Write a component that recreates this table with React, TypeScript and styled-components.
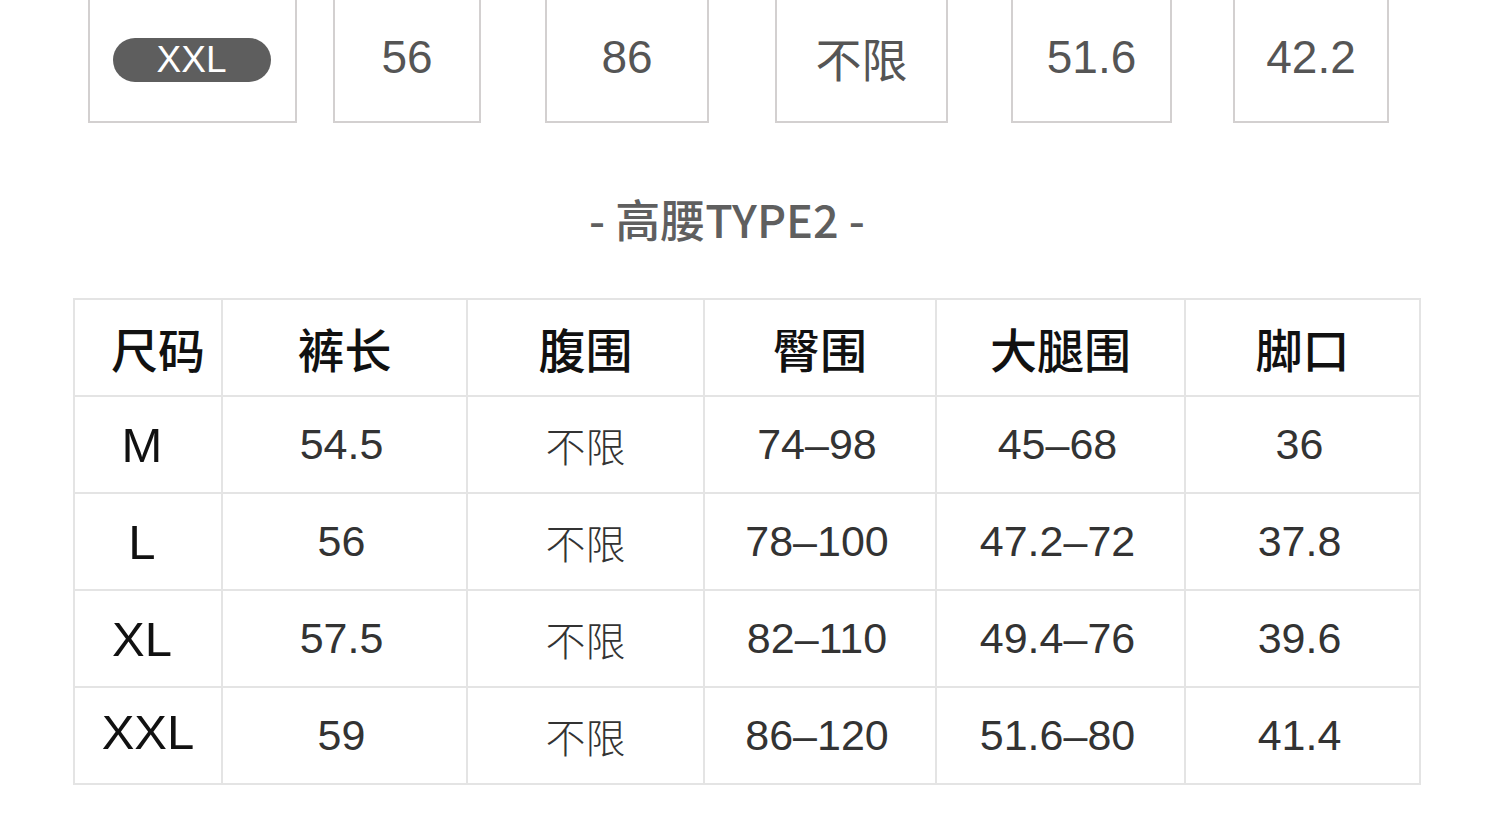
import React from "react";
import styled, { createGlobalStyle } from "styled-components";

const GlobalStyle = createGlobalStyle`
  html, body {
    margin: 0;
    padding: 0;
    background: #fff;
  }
`;

const topCells = [
  { value: "XXL", width: 209, gap: 88, pill: true },
  { value: "56", width: 148, gap: 36 },
  { value: "86", width: 164, gap: 64 },
  { value: "不限", width: 173, gap: 66 },
  { value: "51.6", width: 161, gap: 63 },
  { value: "42.2", width: 156, gap: 61 },
];

const columns = [148, 245, 237, 232, 249, 235];
const headers = ["尺码", "裤长", "腹围", "臀围", "大腿围", "脚口"];

const rows = [
  ["M", "54.5", "不限", "74–98", "45–68", "36"],
  ["L", "56", "不限", "78–100", "47.2–72", "37.8"],
  ["XL", "57.5", "不限", "82–110", "49.4–76", "39.6"],
  ["XXL", "59", "不限", "86–120", "51.6–80", "41.4"],
];

const App = () => {
  return (
    <Page>
      <GlobalStyle />
      <TopRow>
        {topCells.map((c) => (
          <TopCell key={c.value} $w={c.width} $ml={c.gap}>
            {c.pill ? <SizePill>{c.value}</SizePill> : c.value}
          </TopCell>
        ))}
      </TopRow>

      <Title>- 高腰TYPE2 -</Title>

      <SizeTable>
        <colgroup>
          {columns.map((w, i) => (
            <col key={i} style={{ width: w }} />
          ))}
        </colgroup>
        <thead>
          <tr>
            {headers.map((h, i) => (
              <HeadCell key={h} $first={i === 0}>
                {h}
              </HeadCell>
            ))}
          </tr>
        </thead>
        <tbody>
          {rows.map((r) => (
            <tr key={r[0]}>
              <SizeCell $wide={r[0] === "XXL"}>{r[0]}</SizeCell>
              {r.slice(1).map((v, i) => (
                <DataCell key={i} $cjk={v === "不限"}>
                  {v}
                </DataCell>
              ))}
            </tr>
          ))}
        </tbody>
      </SizeTable>
    </Page>
  );
};

const Page = styled.div`
  width: 1500px;
  height: 830px;
  overflow: hidden;
  background: #fff;
`;

const TopRow = styled.div`
  display: flex;
  align-items: flex-start;
`;

const TopCell = styled.div<{ $w: number; $ml: number }>`
  box-sizing: border-box;
  width: ${(p) => p.$w}px;
  margin-left: ${(p) => p.$ml}px;
  height: 123px;
  border: 2px solid #d3d0d0;
  border-top: none;
  display: flex;
  align-items: center;
  justify-content: center;
  padding-bottom: 8px;
  font-family: "Liberation Sans", "Noto Sans CJK SC", sans-serif;
  font-size: 46px;
  color: #555;
`;

const SizePill = styled.span`
  display: flex;
  align-items: center;
  justify-content: center;
  width: 158px;
  height: 44px;
  margin-top: 6px;
  margin-left: -2px;
  border-radius: 22px;
  background: #5e5e5e;
  color: #fff;
  font-size: 37px;
`;

const Title = styled.div`
  margin: 73px 0 56px;
  padding-right: 46px;
  height: 46px;
  line-height: 46px;
  text-align: center;
  font-family: "Noto Sans CJK SC", sans-serif;
  font-weight: 500;
  font-size: 45px;
  color: #5f5f5f;
`;

const SizeTable = styled.table`
  margin-left: 73px;
  width: 1346px;
  border-collapse: collapse;
  table-layout: fixed;

  td,
  th {
    box-sizing: border-box;
    height: 97px;
    border: 2px solid #e4e4e4;
    padding: 0;
    text-align: center;
    vertical-align: middle;
  }
`;

const HeadCell = styled.th<{ $first?: boolean }>`
  font-family: "Noto Sans CJK SC", sans-serif;
  font-weight: 500;
  font-size: 47px;
  color: #111;

  && {
    padding-left: ${(p) => (p.$first ? "20px" : "0")};
  }
`;

const SizeCell = styled.td<{ $wide?: boolean }>`
  font-family: "Liberation Sans", sans-serif;
  font-size: 49px;
  color: #111;

  && {
    padding-right: ${(p) => (p.$wide ? "0" : "12px")};
    padding-bottom: ${(p) => (p.$wide ? "8px" : "0")};
  }
`;

const DataCell = styled.td<{ $cjk?: boolean }>`
  font-family: ${(p) =>
    p.$cjk ? `"Noto Sans CJK SC", sans-serif` : `"Liberation Sans", sans-serif`};
  font-size: ${(p) => (p.$cjk ? "40px" : "43px")};
  font-weight: ${(p) => (p.$cjk ? 300 : 400)};
  color: #333;

  && {
    padding-right: ${(p) => (p.$cjk ? "0" : "6px")};
  }
`;

export default App;
